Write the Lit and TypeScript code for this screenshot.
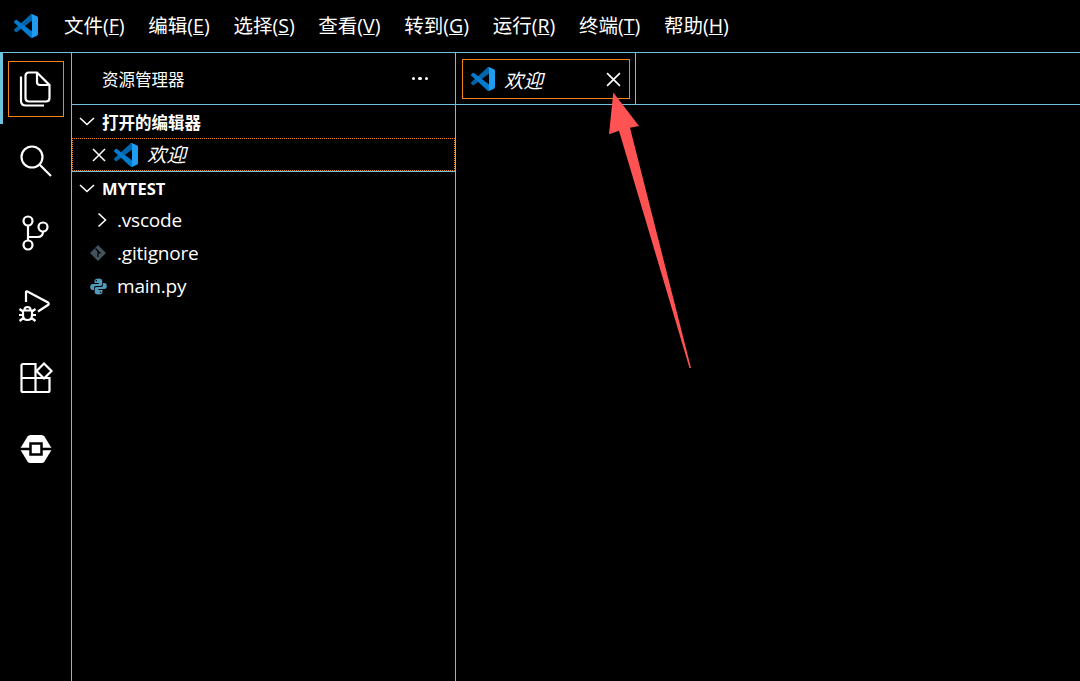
import { LitElement, html, css, svg } from 'lit';
import { customElement } from 'lit/decorators.js';

const menus = [
   ['文件', 'F'],
   ['编辑', 'E'],
   ['选择', 'S'],
   ['查看', 'V'],
   ['转到', 'G'],
   ['运行', 'R'],
   ['终端', 'T'],
   ['帮助', 'H'],
];

const logo = (size: number) => html`
   <svg width=${size} height=${size} viewBox="0 0 100 100">
      <path fill="#0065A9" d="M96.4614 10.7962L75.8569 0.875542C73.4719 -0.272773 70.6217 0.211611 68.75 2.08333L1.29858 63.5832C-0.515693 65.2373 -0.513607 68.0937 1.30308 69.7452L6.81272 74.754C8.29793 76.1042 10.5347 76.2036 12.1338 74.9905L93.3609 13.3699C96.086 11.3026 100 13.2462 100 16.6667V16.4275C100 14.0265 98.6246 11.8378 96.4614 10.7962Z"/>
      <path fill="#007ACC" d="M96.4614 89.2038L75.8569 99.1245C73.4719 100.273 70.6217 99.7884 68.75 97.9167L1.29858 36.4169C-0.515693 34.7627 -0.513607 31.9063 1.30308 30.2548L6.81272 25.246C8.29793 23.8958 10.5347 23.7964 12.1338 25.0095L93.3609 86.6301C96.086 88.6974 100 86.7538 100 83.3334V83.5726C100 85.9735 98.6246 88.1622 96.4614 89.2038Z"/>
      <path fill="#1F9CF0" d="M75.8578 99.1263C73.4721 100.274 70.6219 99.7885 68.75 97.9166C71.0564 100.223 75 98.5895 75 95.3278V4.67213C75 1.41039 71.0564 -0.223106 68.75 2.08329C70.6219 0.211402 73.4721 -0.273666 75.8578 0.873633L96.4587 10.7807C98.6234 11.8217 100 14.0112 100 16.4132V83.5871C100 85.9891 98.6234 88.1786 96.4587 89.2196L75.8578 99.1263Z"/>
   </svg>
`;

const chevronDown = html`
   <svg class="chev" width="16" height="9" viewBox="0 0 16 9"><path d="M1 1L8 7.5L15 1"/></svg>
`;

const close = (size: number) => html`
   <svg class="chev x" width=${size} height=${size} viewBox="0 0 14 14"><path d="M1 1L13 13M13 1L1 13"/></svg>
`;

// activity bar icons, all drawn in a 36 box
const activity = [
   svg`<path d="M11 1.500H19L31.500 14V27Q31.500 30.500 28 30.500H11Q7.500 30.500 7.500 27V5Q7.500 1.500 11 1.500Z"/><path d="M19 1.500V11Q19 14 22 14H31.500"/><path d="M3 5.500V30Q3 34.500 8 34.500H26"/>`,
   svg`<circle cx="14" cy="14" r="10.5"/><path d="M22 22L33 33"/>`,
   svg`<circle cx="10" cy="6" r="4.5"/><circle cx="10" cy="30" r="4.5"/><circle cx="25" cy="12" r="4.5"/><path d="M10 10.5V25.5M10 22H20Q25 22 25 16.5"/>`,
   svg`<path d="M8 15V5.500Q8 4 9.500 4.500L30 15.500Q31.500 17 30 18L20 24.500"/><path d="M5 23.500H14V28Q14 33 9.500 33Q5 33 5 28ZM6.500 23Q6.500 20 9.500 20Q12.500 20 12.500 23M1.500 22L5 24.500M17.500 22L14 24.500M1 28H5M18 28H14M1.500 34L5.500 31M17.500 34L13.500 31"/>`,
   svg`<path d="M3.500 19H17.500V5H5Q3.500 5 3.500 6.500ZM3.500 19V31.500Q3.500 33 5 33H17.500V19ZM17.500 19H31.500V31.500Q31.500 33 30 33H17.500Z"/><path d="M26 4.500L33.500 12L26 19.500L18.500 12Z"/>`,
   svg`<path class="solid" d="M12.500 4H23.500Q25.500 4 26.500 5.500L33.500 17Q34 18 33.500 19L26.500 30.500Q25.500 32 23.500 32H12.500Q10.500 32 9.500 30.500L2.500 19Q2 18 2.500 17L9.500 5.500Q10.500 4 12.500 4Z"/><path class="cut" d="M1 18H12M24 18H35"/><rect class="cut" x="12.500" y="12.500" width="11" height="11"/>`,
];

@customElement('app-root')
export class AppRoot extends LitElement {
   static styles = css`
      :host {
         display: block;
         position: relative;
         width: 1080px;
         height: 681px;
         overflow: hidden;
         background: #000;
         color: #fff;
         font-family: 'Open Sans', 'Noto Sans CJK SC', sans-serif;
         font-size: 19.5px;
         --line: #6fc3df;
         --focus: #f38518;
      }
      svg {
         display: block;
         flex: none;
      }
      .chev path {
         fill: none;
         stroke: #fff;
         stroke-width: 1.6;
      }
      .chev.x path {
         stroke-width: 1.5;
      }
      .titlebar {
         height: 52px;
         display: flex;
         align-items: center;
         padding-left: 14px;
      }
      .menus {
         display: flex;
         gap: 23.7px;
         margin: 0 0 3px 26px;
      }
      .main {
         height: 628px;
         display: flex;
         border-top: 1px solid var(--line);
      }
      .activity {
         width: 71px;
         flex: none;
         border-right: 1px solid var(--line);
      }
      .act {
         height: 72px;
         display: flex;
         align-items: center;
         justify-content: center;
         position: relative;
      }
      .act.active::before {
         content: '';
         position: absolute;
         left: 0;
         top: -1px;
         width: 3px;
         height: 72px;
         background: var(--line);
      }
      .act.active::after {
         content: '';
         position: absolute;
         left: 8px;
         top: 8px;
         width: 54px;
         height: 54px;
         border: 1px solid var(--focus);
      }
      .act path, .act circle, .act rect {
         fill: none;
         stroke: #fff;
         stroke-width: 2.2;
      }
      .act path.solid {
         fill: #fff;
         stroke: none;
      }
      .act .cut {
         stroke: #000;
         stroke-width: 2.5;
      }
      .sidebar {
         width: 383px;
         flex: none;
         border-right: 1px solid var(--line);
      }
      .side-head {
         height: 51px;
         display: flex;
         align-items: center;
         justify-content: space-between;
         padding: 0 27px 0 30px;
         border-bottom: 1px solid var(--line);
         font-size: 16.5px;
      }
      .dots {
         display: flex;
         gap: 3px;
      }
      .dots i {
         width: 3.5px;
         height: 3.5px;
         border-radius: 50%;
         background: #fff;
      }
      .section {
         height: 33px;
         display: flex;
         align-items: center;
         gap: 7px;
         padding-left: 7px;
         font-size: 16.5px;
         font-weight: 700;
      }
      .section.ruled {
         border-top: 1px solid var(--line);
      }
      .row {
         height: 33px;
         box-sizing: border-box;
         display: flex;
         align-items: center;
      }
      .open {
         outline: 1px dotted var(--focus);
         outline-offset: -1px;
         padding-left: 20px;
         gap: 8px;
      }
      .open em {
         font-style: italic;
         margin: 0 0 2px 1px;
      }
      .file {
         padding: 0 0 3px 18px;
         font-size: 19px;
         letter-spacing: -0.2px;
      }
      .file .ic {
         width: 27px;
         display: flex;
         align-items: center;
      }
      .file .ic.folder {
         padding-left: 7px;
         width: 20px;
      }
      .editor {
         flex: 1;
      }
      .tabs {
         height: 51px;
         border-bottom: 1px solid var(--line);
         display: flex;
      }
      .tab {
         width: 180px;
         border-right: 1px solid var(--line);
         padding: 6px 5px 5px 6px;
         box-sizing: border-box;
      }
      .tab-in {
         height: 40px;
         box-sizing: border-box;
         border: 1px solid var(--focus);
         display: flex;
         align-items: center;
         padding: 0 8px 0 8px;
         gap: 9px;
      }
      .tab-in em {
         font-style: italic;
      }
      .tab-in .chev {
         margin-left: auto;
      }
      .arrow {
         position: absolute;
         left: 0;
         top: 0;
         pointer-events: none;
      }
   `;

   render() {
      return html`
         <div class="titlebar">
            ${logo(24)}
            <div class="menus">
               ${menus.map(([name, key]) => html`<span>${name}(<u>${key}</u>)</span>`)}
            </div>
         </div>
         <div class="main">
            <div class="activity">
               ${activity.map((icon, i) => html`
                  <div class="act ${i === 0 ? 'active' : ''}">
                     <svg width="36" height="36" viewBox="0 0 36 36">${icon}</svg>
                  </div>
               `)}
            </div>
            <div class="sidebar">
               <div class="side-head">
                  <span>资源管理器</span>
                  <div class="dots"><i></i><i></i><i></i></div>
               </div>
               <div class="section">${chevronDown}<span>打开的编辑器</span></div>
               <div class="row open">${close(14)}${logo(24)}<em>欢迎</em></div>
               <div class="section ruled">${chevronDown}<span>MYTEST</span></div>
               <div class="row file">
                  <span class="ic folder">
                     <svg class="chev" width="10" height="16" viewBox="0 0 10 16"><path d="M1.500 1.500L8.500 8L1.500 14.500"/></svg>
                  </span>
                  <span>.vscode</span>
               </div>
               <div class="row file">
                  <span class="ic">
                     <svg width="16" height="16" viewBox="0 0 16 16">
                        <path fill="#41535b" d="M8 0L16 8L8 16L0 8Z"/>
                        <path fill="none" stroke="#000" stroke-width="1.200" d="M5.500 3.500L10.500 8.500M8 6V12"/>
                     </svg>
                  </span>
                  <span>.gitignore</span>
               </div>
               <div class="row file">
                  <span class="ic">
                     <svg width="17" height="17" viewBox="0 0 17 17">
                        <path fill="#519aba" d="M8.500 0.500Q4.500 0.500 4.500 3V5H8.700V6H2.700Q0.200 6 0.200 9Q0.200 12 2.700 12H4V10Q4 8 6 8H10.500Q12.300 8 12.300 6.200V3Q12.300 0.500 8.500 0.500ZM6.300 2Q7 2 7 2.800Q7 3.500 6.300 3.500Q5.600 3.500 5.600 2.800Q5.600 2 6.300 2Z"/>
                        <path fill="#519aba" d="M8.500 16.500Q12.500 16.500 12.500 14V12H8.300V11H14.300Q16.800 11 16.800 8Q16.800 5 14.300 5H13V7Q13 9 11 9H6.500Q4.700 9 4.700 10.800V14Q4.700 16.500 8.500 16.500ZM10.700 15Q10 15 10 14.200Q10 13.500 10.700 13.500Q11.400 13.500 11.400 14.200Q11.400 15 10.700 15Z"/>
                     </svg>
                  </span>
                  <span>main.py</span>
               </div>
            </div>
            <div class="editor">
               <div class="tabs">
                  <div class="tab">
                     <div class="tab-in">${logo(24)}<em>欢迎</em>${close(15)}</div>
                  </div>
               </div>
            </div>
         </div>
         <svg class="arrow" width="1080" height="681" viewBox="0 0 1080 681">
            <path fill="#ff5252" d="M613.300 92.500L639 126L630 127.700L691 368L689.500 368L619 130.700L609 134.300Z"/>
         </svg>
      `;
   }
}
